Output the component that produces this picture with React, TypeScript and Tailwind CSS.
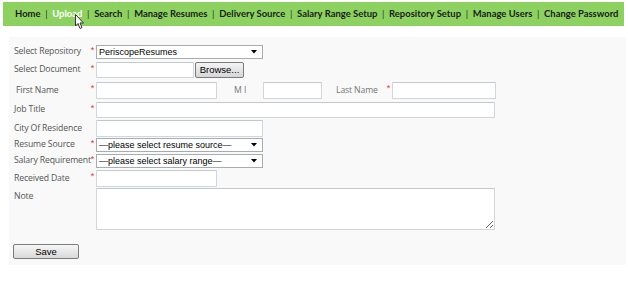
import React from "react";

const navItems = [
  "Home",
  "Upload",
  "Search",
  "Manage Resumes",
  "Delivery Source",
  "Salary Range Setup",
  "Repository Setup",
  "Manage Users",
  "Change Password",
];

const labelCls =
  "w-[75px] shrink-0 text-[8.7px] tracking-[-0.15px] text-[#555] whitespace-nowrap font-['Open_Sans',sans-serif]";
const inputCls =
  "h-[16px] bg-white border border-[#cfd6dc] border-t-[#c2c8cc] rounded-[1px] box-border";

function Star() {
  return (
    <span className="w-[7px] shrink-0 text-[#e53030] text-[9px] leading-none font-['Liberation_Sans',sans-serif] -mt-[4px] text-center">
      *
    </span>
  );
}

function Select({ text, w }: { text: string; w: string }) {
  return (
    <div
      className={`${w} h-[14px] bg-white border border-[#a5acb2] flex items-center justify-between pl-[2px] pr-[5px] box-border`}
    >
      <span className="text-[9px] leading-none text-black font-['Liberation_Sans',sans-serif] whitespace-nowrap">
        {text}
      </span>
      <svg width="6" height="4" viewBox="0 0 6 4">
        <path d="M0 0 L6 0 L3 3.5 Z" fill="#000" />
      </svg>
    </div>
  );
}

function Cursor() {
  return (
    <svg
      className="absolute left-[23px] top-[7px]"
      width="10"
      height="16"
      viewBox="0 0 10 16"
    >
      <path
        d="M0.5 0.5 L0.5 12 L3 9.5 L5 14.5 L7 13.5 L5 9 L8.5 9 Z"
        fill="#fff"
        stroke="#333"
        strokeWidth="1"
        strokeLinejoin="round"
      />
    </svg>
  );
}

export default function App() {
  return (
    <div className="w-[628px] h-[291px] bg-white pt-[2px]">
      <div className="ml-[3px] w-[621px] h-[24px] bg-[#8dd160] flex items-center pl-[12px] font-['Lato',sans-serif] font-bold text-[9.45px] text-[#1b1b1b] whitespace-nowrap">
        {navItems.map((item, i) => (
          <React.Fragment key={item}>
            {i > 0 && <span className="mx-[4.7px] font-normal text-[#333]">|</span>}
            <span className={i === 1 ? "relative text-white" : ""}>
              {item}
              {i === 1 && <Cursor />}
            </span>
          </React.Fragment>
        ))}
      </div>

      <div className="mt-[11px] ml-[9px] w-[617px] h-[228px] bg-[#f9f9f9] pl-[5px] pt-[8px] flex flex-col">
        <div className="h-[17px] flex items-start">
          <div className="flex items-center h-[14px]">
            <span className={labelCls}>Select Repository</span>
            <Star />
            <Select text="PeriscopeResumes" w="w-[167px]" />
          </div>
        </div>

        <div className="h-[20px] flex items-start">
          <div className="flex items-center h-[16px]">
            <span className={labelCls}>Select Document</span>
            <Star />
            <div className={`${inputCls} w-[98px]`} />
            <div className="ml-[1px] w-[49px] h-[16px] rounded-[2px] border border-[#7b7b7b] bg-gradient-to-b from-[#f4f4f4] to-[#d6d6d6] flex items-center justify-center text-[9.5px] text-black font-['Liberation_Sans',sans-serif] leading-none box-border -mt-[1px]">
              Browse...
            </div>
          </div>
        </div>

        <div className="h-[20px] flex items-start">
          <div className="flex items-center h-[17px]">
            <span className={`${labelCls} pl-[2px]`}>First Name</span>
            <Star />
            <div className={`${inputCls} h-[17px] w-[121px]`} />
            <span className="ml-[17px] w-[29px] text-[8.7px] text-[#777] font-['Open_Sans',sans-serif]">
              M I
            </span>
            <div className={`${inputCls} h-[17px] w-[59px]`} />
            <span className="ml-[14px] w-[49px] text-[8.7px] tracking-[-0.15px] text-[#777] font-['Open_Sans',sans-serif]">
              Last Name
            </span>
            <Star />
            <div className={`${inputCls} h-[17px] w-[104px]`} />
          </div>
        </div>

        <div className="h-[18px] flex items-start">
          <div className="flex items-center h-[16px]">
            <span className={labelCls}>Job Title</span>
            <Star />
            <div className={`${inputCls} w-[399px]`} />
          </div>
        </div>

        <div className="h-[18px] flex items-start">
          <div className="flex items-center h-[17px]">
            <span className={labelCls}>City Of Residence</span>
            <span className="w-[7px] shrink-0" />
            <div className={`${inputCls} h-[17px] w-[167px]`} />
          </div>
        </div>

        <div className="h-[16px] flex items-start">
          <div className="flex items-center h-[14px]">
            <span className={labelCls}>Resume Source</span>
            <Star />
            <Select text="—please select resume source—" w="w-[167px]" />
          </div>
        </div>

        <div className="h-[16px] flex items-start">
          <div className="flex items-center h-[14px]">
            <span className={labelCls}>Salary Requirement</span>
            <Star />
            <Select text="—please select salary range—" w="w-[167px]" />
          </div>
        </div>

        <div className="h-[18px] flex items-start">
          <div className="flex items-center h-[17px]">
            <span className={labelCls}>Received Date</span>
            <Star />
            <div className={`${inputCls} h-[17px] w-[121px]`} />
          </div>
        </div>

        <div className="h-[42px] flex items-start">
          <span className={`${labelCls} mt-[2px]`}>Note</span>
          <span className="w-[7px] shrink-0" />
          <textarea
            readOnly
            className="w-[399px] h-[42px] bg-white border border-[#cfd6dc] border-t-[#c2c8cc] rounded-[1px] box-border resize outline-none"
          />
        </div>

        <div className="mt-[14px] w-[66px] h-[15px] rounded-[2px] border border-[#7b7b7b] bg-gradient-to-b from-[#f6f6f6] to-[#d9d9d9] flex items-center justify-center text-[9.5px] text-black font-['Liberation_Sans',sans-serif] leading-none box-border -ml-[1px]">
          Save
        </div>
      </div>
    </div>
  );
}
